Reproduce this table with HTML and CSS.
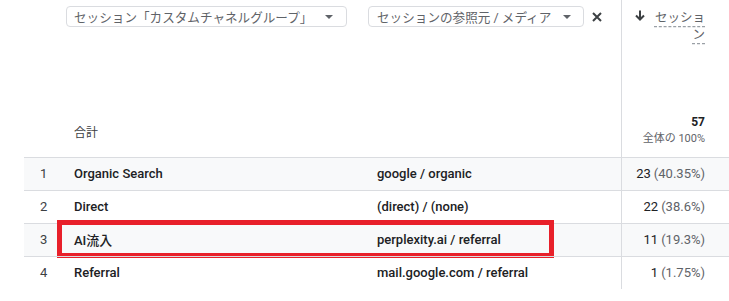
FILE: index.html
```html
<!DOCTYPE html>
<html lang="ja">
<head>
<meta charset="utf-8">
<link rel="stylesheet" href="styles.css">
</head>
<body>
<div class="table">
  <div class="row head">
    <div class="cell idx"></div>
    <div class="cell name">
      <div class="select sel1"><span>セッション「カスタムチャネルグループ」</span><i class="caret"></i></div>
    </div>
    <div class="cell src">
      <div class="select sel2"><span>セッションの参照元 / メディア</span><i class="caret"></i></div>
      <svg class="close" width="10" height="10" viewBox="0 0 10 10"><path d="M1 1L9 9M9 1L1 9" stroke="#3c4043" stroke-width="2" fill="none"/></svg>
    </div>
    <div class="cell val metric">
      <svg class="arrow" width="10" height="11" viewBox="0 0 10 11"><path d="M5 0.5V9.5M1 5.5L5 9.5L9 5.5" stroke="#3c4043" stroke-width="2" fill="none"/></svg>
      <span class="mlabel">セッショ<br>ン</span>
    </div>
  </div>
  <div class="row total">
    <div class="cell idx"></div>
    <div class="cell name">合計</div>
    <div class="cell src"></div>
    <div class="cell val">
      <div class="tnum">57</div>
      <div class="tpct">全体の 100%</div>
    </div>
  </div>
  <div class="row data alt">
    <div class="cell idx">1</div>
    <div class="cell name">Organic Search</div>
    <div class="cell src">google / organic</div>
    <div class="cell val">23 <span class="pct">(40.35%)</span></div>
  </div>
  <div class="row data">
    <div class="cell idx">2</div>
    <div class="cell name">Direct</div>
    <div class="cell src">(direct) / (none)</div>
    <div class="cell val">22 <span class="pct">(38.6%)</span></div>
  </div>
  <div class="row data alt marked">
    <div class="cell idx">3</div>
    <div class="cell name">AI流入</div>
    <div class="cell src">perplexity.ai / referral</div>
    <div class="cell val">11 <span class="pct">(19.3%)</span></div>
    <div class="highlight"></div>
  </div>
  <div class="row data">
    <div class="cell idx">4</div>
    <div class="cell name">Referral</div>
    <div class="cell src">mail.google.com / referral</div>
    <div class="cell val">1 <span class="pct">(1.75%)</span></div>
  </div>
</div>
</body>
</html>
```

FILE: styles.css
```css
html, body {
  margin: 0;
  padding: 0;
  background: #fff;
}
body {
  font-family: Roboto, "Noto Sans CJK JP", sans-serif;
  font-size: 13px;
  color: #202124;
  overflow: hidden;
}
.table {
  margin-left: 24px;
}
.row {
  display: grid;
  grid-template-columns: 50px 303px 244px 1fr;
  position: relative;
}
.cell {
  display: flex;
  align-items: center;
  min-width: 0;
  white-space: nowrap;
}
.idx {
  padding-left: 16px;
  color: #3c4043;
}
.val {
  border-left: 1px solid #dadce0;
  justify-content: flex-end;
  padding-right: 24px;
}
.head {
  height: 100px;
}
.head .name, .head .src {
  align-items: flex-start;
  padding-top: 6px;
}
.select {
  box-sizing: border-box;
  height: 21px;
  border: 1px solid #dadce0;
  border-radius: 4px;
  display: flex;
  align-items: center;
  justify-content: space-between;
  color: #5f6368;
  font-size: 12.6px;
  white-space: nowrap;
}
.sel1 {
  margin-left: -8px;
  width: 281px;
  padding: 0 13px 0 7px;
}
.sel2 {
  margin-left: -9px;
  width: 216px;
  padding: 0 12px 0 8px;
}
.caret {
  width: 0;
  height: 0;
  border-left: 4px solid transparent;
  border-right: 4px solid transparent;
  border-top: 4px solid #5f6368;
}
.close {
  margin-left: 8px;
  margin-top: 6px;
}
.metric {
  align-items: flex-start;
  padding-top: 9px;
  text-align: right;
}
.arrow {
  margin-top: 1px;
  margin-right: 9px;
  flex: none;
}
.mlabel {
  color: #5f6368;
  font-size: 12.5px;
  line-height: 17px;
  width: 51px;
  text-align: right;
  white-space: normal;
  text-decoration: underline dashed #9aa0a6;
  text-underline-offset: 4px;
}
.total {
  height: 57px;
}
.total .name {
  color: #3c4043;
  font-size: 12px;
  padding-top: 5px;
}
.total .val {
  flex-direction: column;
  align-items: flex-end;
  justify-content: flex-start;
  padding-top: 14px;
}
.tnum {
  font-weight: 700;
  font-size: 12px;
  line-height: 16px;
}
.tpct {
  color: #5f6368;
  font-size: 11px;
  line-height: 18px;
}
.data {
  height: 33px;
  border-top: 1px solid #dadce0;
  box-sizing: border-box;
}
.data .cell {
  padding-bottom: 1px;
}
.data .name, .data .src {
  font-weight: 500;
}
.data .val {
  color: #202124;
}
.pct {
  color: #5f6368;
  margin-left: 3px;
}
.alt {
  background: #f8f9fa;
}
.highlight {
  position: absolute;
  left: 33px;
  top: -4px;
  width: 497px;
  height: 38px;
  box-sizing: border-box;
  border: 5px solid #e8202a;
  pointer-events: none;
}
```
